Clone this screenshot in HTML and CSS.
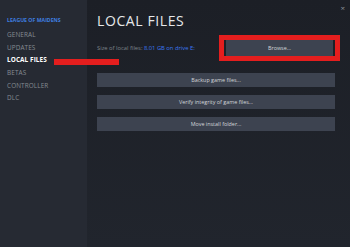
FILE: index.html
```html
<!DOCTYPE html>
<html lang="en">
<head>
    <meta charset="UTF-8">
    <title>Properties - Local Files</title>
    <link rel="stylesheet" href="styles.css">
</head>
<body>
    <div class="window">
        <nav class="sidebar">
            <div class="game-title">LEAGUE OF MAIDENS</div>
            <ul class="nav-list">
                <li class="nav-item">GENERAL</li>
                <li class="nav-item">UPDATES</li>
                <li class="nav-item active">LOCAL FILES</li>
                <li class="nav-item">BETAS</li>
                <li class="nav-item">CONTROLLER</li>
                <li class="nav-item">DLC</li>
            </ul>
        </nav>

        <main class="content">
            <h1 class="page-title">LOCAL FILES</h1>
            <div class="size-row">
                <p class="size-text">Size of local files: <span class="size-value">8.01 GB on drive E:</span></p>
                <div class="highlight-box">
                    <button class="steam-btn browse-btn">Browse...</button>
                </div>
            </div>
            <div class="actions">
                <button class="steam-btn">Backup game files...</button>
                <button class="steam-btn">Verify integrity of game files...</button>
                <button class="steam-btn">Move install folder...</button>
            </div>
        </main>

        <span class="close-btn">&times;</span>
        <div class="marker"></div>
    </div>
</body>
</html>
```

FILE: styles.css
```css
/* Base Reset */
* {
    margin: 0;
    padding: 0;
    box-sizing: border-box;
}

body {
    font-family: 'Open Sans', 'Liberation Sans', sans-serif;
    background: #1e2129;
    width: 350px;
    height: 247px;
    overflow: hidden;
}

.window {
    position: relative;
    display: flex;
    height: 247px;
}

/* Sidebar */
.sidebar {
    width: 87px;
    background: #262a33;
    padding: 16px 0 0 7px;
}

.game-title {
    color: #3f7fe0;
    font-size: 5.2px;
    font-weight: 700;
    height: 8px;
    line-height: 8px;
    margin-bottom: 5px;
}

.nav-list {
    list-style: none;
}

.nav-item {
    color: #858a92;
    font-size: 6.4px;
    height: 12.7px;
    line-height: 12.7px;
    letter-spacing: 0.1px;
}

.nav-item.active {
    color: #ffffff;
    font-weight: 700;
}

/* Main content */
.content {
    flex: 1;
    padding: 11px 15px 0 10px;
    background: linear-gradient(180deg, #1c1f26 0%, #21252d 100%);
}

.page-title {
    color: #e6e8ea;
    font-size: 14px;
    font-weight: 400;
    letter-spacing: 0.6px;
    line-height: 20px;
    margin-bottom: 4px;
}

.size-row {
    display: flex;
    justify-content: space-between;
    align-items: center;
    margin-right: -5px;
}

.size-text {
    color: #7e848c;
    font-size: 5.8px;
}

.size-value {
    color: #3c78f0;
}

.highlight-box {
    border: 5px solid #e41e1e;
    padding: 0 2px;
}

.steam-btn {
    display: block;
    width: 100%;
    height: 14px;
    border: none;
    background: #3d4350;
    color: #d3d6da;
    font-family: inherit;
    font-size: 5.4px;
    text-align: center;
}

.browse-btn {
    width: 107px;
    height: 16px;
}

.actions {
    display: flex;
    flex-direction: column;
    gap: 8px;
    margin-top: 12px;
}

/* Overlays */
.close-btn {
    position: absolute;
    top: 2px;
    right: 5px;
    color: #8a8f96;
    font-size: 8px;
}

.marker {
    position: absolute;
    left: 54px;
    top: 59px;
    width: 65px;
    height: 6px;
    background: #e41e1e;
}
```
